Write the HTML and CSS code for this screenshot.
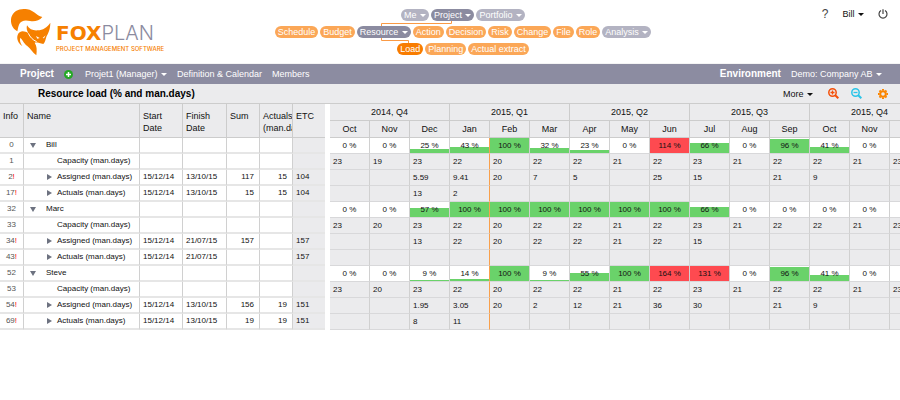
FILE: index.html
```html
<!DOCTYPE html>
<html lang="en">
<head>
<meta charset="utf-8">
<title>FoxPlan - Resource load</title>
<link rel="stylesheet" href="styles.css">
</head>
<body>
<header class="top">
  <a class="logo" href="#">
    <svg class="fox" viewBox="28 24 123 144" aria-hidden="true">
      <path fill="#f68000" d="M50 94C34 86 28 68 32 52C38 32 58 24 80 28C100 31 105 46 125 51C116 62 101 66 88 63C73 59 61 62 56 72C52 80 52 87 50 94Z"/>
      <path fill="#f68000" d="M79 76C86 88 97 92 111 91C127 90 139 83 149 68C149 87 143 99 138 108C134 119 134 127 128 132C116 128 107 126 102 128C109 138 109 150 107 166C95 157 90 145 79 137C70 131 64 117 59 113C56 121 59 129 65 138C53 131 47 116 51 105C56 92 70 91 83 100C78 91 77 84 79 76Z"/>
      <path fill="#fff" d="M106 108L117 114L110 116ZM135 106L126 114L130 115Z"/>
      <path fill="none" stroke="#fff" stroke-width="3" d="M83 100C88 111 96 120 108 125"/>
    </svg>
    <span class="brand">
      <span class="word"><b>FOX</b><span>PLAN</span></span>
      <span class="tagline">PROJECT MANAGEMENT SOFTWARE</span>
    </span>
  </a>
  <nav class="menu" aria-label="Main">
    <div class="pills">
      <button class="pill light">Me <i class="caret"></i></button>
      <button class="pill dark">Project <i class="caret"></i></button>
      <button class="pill light">Portfolio <i class="caret"></i></button>
    </div>
    <div class="pills">
      <a class="pill" href="#">Schedule</a>
      <a class="pill" href="#">Budget</a>
      <button class="pill dark">Resource <i class="caret"></i></button>
      <a class="pill" href="#">Action</a>
      <a class="pill" href="#">Decision</a>
      <a class="pill" href="#">Risk</a>
      <a class="pill" href="#">Change</a>
      <a class="pill" href="#">File</a>
      <a class="pill" href="#">Role</a>
      <button class="pill light">Analysis <i class="caret"></i></button>
    </div>
    <div class="pills">
      <a class="pill current" href="#">Load</a>
      <a class="pill" href="#">Planning</a>
      <a class="pill" href="#">Actual extract</a>
    </div>
    <svg class="links" width="378" height="46" viewBox="0 0 378 46" aria-hidden="true">
      <path d="M178.500 12v2.500H108.500V17M108.500 29v2.500H135.500V34"/>
    </svg>
  </nav>
  <div class="user">
    <button class="help" aria-label="Help">?</button>
    <button>Bill <i class="caret"></i></button>
    <button aria-label="Log out"><svg width="10" height="10" viewBox="0 0 10 10"><path fill="none" stroke="#444" stroke-width="1.200" d="M3 1.600A4 4 0 1 0 7 1.600M5 .3V5"/></svg></button>
  </div>
</header>

<div class="context">
  <strong>Project</strong>
  <button class="add" aria-label="Add project"><svg width="9" height="9" viewBox="0 0 9 9"><circle cx="4.500" cy="4.500" r="4.500" fill="#25a825"/><path stroke="#fff" stroke-width="1.500" d="M4.500 2v5M2 4.500h5"/></svg></button>
  <button>Projet1 (Manager) <i class="caret"></i></button>
  <a href="#">Definition &amp; Calendar</a>
  <a href="#">Members</a>
  <strong class="env">Environment</strong>
  <button>Demo: Company AB <i class="caret"></i></button>
</div>

<div class="toolbar">
  <h1>Resource load (% and man.days)</h1>
  <button class="more">More <i class="caret"></i></button>
  <button aria-label="Zoom in"><svg width="11" height="11" viewBox="0 0 11 11" fill="none" stroke="#f4500a"><circle cx="4.500" cy="4.500" r="3.700" stroke-width="1.500"/><path stroke-width="2" d="M7 7l3.300 3.300"/><path stroke-width="1.300" d="M2.500 4.500h4M4.500 2.500v4"/></svg></button>
  <button aria-label="Zoom out"><svg width="11" height="11" viewBox="0 0 11 11" fill="none" stroke="#2bc4e8"><circle cx="4.500" cy="4.500" r="3.700" stroke-width="1.500"/><path stroke-width="2" d="M7 7l3.300 3.300"/><path stroke-width="1.300" d="M2.500 4.500h4"/></svg></button>
  <button class="gear" aria-label="Settings"><svg width="10" height="10" viewBox="0 0 10 10" fill="none" stroke="#fb8500"><circle cx="5" cy="5" r="2.800" stroke-width="2"/><path stroke-width="2" d="M5 0v1.500M5 8.500V10M0 5h1.500M8.500 5H10M1.500 1.500l1 1M7.500 7.500l1 1M8.500 1.500l-1 1M2.500 7.500l-1 1"/></svg></button>
</div>

<main class="planner">
  <table class="tasks">
    <colgroup><col class="c-info"><col class="c-name"><col class="c-start"><col class="c-finish"><col class="c-sum"><col class="c-act"><col class="c-etc"></colgroup>
    <thead><tr><th>Info</th><th>Name</th><th>Start<br>Date</th><th>Finish<br>Date</th><th>Sum</th><th>Actuals<br>(man.days)</th><th>ETC</th></tr></thead>
    <tbody id="tasks"></tbody>
  </table>
  <div class="pane">
    <table class="months">
      <thead>
        <tr><th colspan="3">2014, Q4</th><th colspan="3">2015, Q1</th><th colspan="3">2015, Q2</th><th colspan="3">2015, Q3</th><th colspan="3">2015, Q4</th></tr>
        <tr id="months"></tr>
      </thead>
      <tbody id="load"></tbody>
    </table>
  </div>
</main>
<script src="app.js"></script>
</body>
</html>
```

FILE: styles.css
```css
* { box-sizing: border-box; }
body {
  margin: 0;
  background: #fff;
  color: #111;
  font: 9px/12px "Liberation Sans", Arial, sans-serif;
}
button {
  font: inherit;
  color: inherit;
  background: none;
  border: 0;
  padding: 0;
  white-space: nowrap;
}
button svg { display: block; }
a { color: inherit; text-decoration: none; white-space: nowrap; }
.caret {
  display: inline-block;
  margin-left: 1px;
  border: 3px solid transparent;
  border-top-color: currentColor;
  border-bottom: 0;
  vertical-align: 1px;
}

.top {
  display: grid;
  grid-template-columns: 1fr auto 1fr;
  height: 64px;
  padding: 8px 12px 0 10px;
  border-bottom: 1px solid #f4f4f4;
}
.logo { display: flex; gap: 5px; }
.fox { width: 41px; height: 48px; flex: none; }
.brand { display: flex; flex-direction: column; padding-top: 14px; }
.word {
  display: flex;
  font: 20px/23px "DejaVu Sans", sans-serif;
  color: #8b8ba0;
}
.word b { color: #f68000; }
.word span { font-family: Inter, sans-serif; font-weight: 300; }
.tagline {
  font: 500 6px/8px Inter, sans-serif;
  color: #f68000;
}
.menu {
  position: relative;
  display: flex;
  flex-direction: column;
  align-items: center;
  gap: 5px;
  padding: 1px 0 0 28px;
}
.pills { display: flex; gap: 2px; }
.pill {
  height: 12px;
  padding: 0 3px;
  border-radius: 6px;
  background: #fba757;
  color: #fff;
  line-height: 12px;
}
.pill.light { background: #b3b3c2; }
.pill.dark { background: #8b8ba0; }
.pill.current { background: #f87c00; }
.links { position: absolute; right: 0; top: 1px; fill: none; stroke: #fa9a45; }
.user {
  display: flex;
  justify-content: flex-end;
  align-items: center;
  height: 12px;
  gap: 14px;
}
.help { font-size: 12px; color: #444; }

.context {
  display: flex;
  align-items: center;
  height: 20px;
  padding: 0 18px 0 20px;
  background: #8c8ca1;
  color: #fff;
}
.context strong { font-size: 10px; margin-right: 10px; }
.context button, .context a { margin-right: 10px; }
.context .add { margin-right: 12px; }
.context .env { margin-left: auto; }
.context button:last-child { margin-right: 0; }

.toolbar {
  display: flex;
  align-items: center;
  height: 20px;
  padding: 0 12px 0 38px;
  background: #ebebed;
  border-bottom: 1px solid #ccc;
  gap: 12px;
}
.toolbar h1 { margin: 0; font-size: 10px; color: #000; }
.more { margin-left: auto; margin-right: 3px; }
.gear { margin-left: 4px; }

.planner { display: flex; align-items: flex-start; gap: 5px; }
table { table-layout: fixed; border-collapse: separate; border-spacing: 0; }
th {
  font-weight: normal;
  background: #ebebed;
  border: 0 solid #ccc;
  border-width: 0 1px 1px 0;
  padding: 0;
}
td {
  height: 16px;
  padding: 0;
  border: 0 solid #d0d0d0;
  border-width: 0 1px 1px 0;
  border-bottom-color: #e0e0e0;
  font-size: 8px;
  white-space: nowrap;
}
.tasks { width: 325px; flex: none; }
.c-info { width: 24px; }
.c-name { width: 116px; }
.c-start { width: 43px; }
.c-finish { width: 44px; }
.c-sum { width: 33px; }
.c-act { width: 33px; }
.c-etc { width: 32px; }
.tasks th {
  height: 34px;
  padding: 6px 0 0 3px;
  text-align: left;
  vertical-align: top;
  overflow: hidden;
  white-space: nowrap;
}
.tasks td { padding: 0 3px; border-bottom-width: 2px; border-bottom-color: #e6e6e6; }
.tasks td:first-child { text-align: center; color: #555; padding: 0; }
.tasks td:nth-child(5), .tasks td:nth-child(6) { text-align: right; padding-right: 5px; }
.tasks td:nth-child(7) { background: #ebebed; }
.tasks th:last-child, .tasks td:last-child { border-right: 0; }
.tasks .alert { color: #f00; }
.name { display: flex; align-items: center; gap: 5px; padding-left: 20px; }
.name.person { padding-left: 3px; gap: 10px; }
.name.plain { padding-left: 30px; }
.toggle { border: 3px solid transparent; border-left: 5px solid #6d7280; border-right: 0; }
.person .toggle { border: 3px solid transparent; border-top: 5px solid #6d7280; border-bottom: 0; }

.pane { flex: 1; min-width: 0; overflow: hidden; }
.months { width: 600px; }
.months th { height: 17px; text-align: center; }
.months td { background: #ebebed; padding-left: 3px; border-bottom-color: #d8d8da; }
.months td.pct {
  position: relative;
  padding: 0;
  background: #fff;
  text-align: center;
}
.months td.today { border-right-color: #f9a04c; }
.bar { position: absolute; left: 0; right: 0; bottom: 0; max-height: 100%; background: #6ad26a; }
.bar.over { background: #fe4a50; }
.pct span { position: relative; }
```

FILE: app.js
```javascript
const MONTHS = ["Oct", "Nov", "Dec", "Jan", "Feb", "Mar", "Apr", "May", "Jun", "Jul", "Aug", "Sep", "Oct", "Nov", "Dec"];
const TODAY = 3; // month column whose right edge marks the current date

// [id, alert, kind, name, start, finish, sum, actuals, etc, values]
const ROWS = [
  [0, 0, "person", "Bill", "", "", "", "", "", [0, 0, 25, 43, 100, 32, 23, 0, 114, 66, 0, 96, 41, 0, 0]],
  [1, 0, "plain", "Capacity (man.days)", "", "", "", "", "", [23, 19, 23, 22, 20, 22, 22, 21, 22, 23, 21, 22, 22, 21, 23]],
  [2, 1, "item", "Assigned (man.days)", "15/12/14", "13/10/15", 117, 15, 104, ["", "", 5.59, 9.41, 20, 7, 5, "", 25, 15, "", 21, 9]],
  [17, 1, "item", "Actuals (man.days)", "15/12/14", "13/10/15", 15, 15, 104, ["", "", 13, 2]],
  [32, 0, "person", "Marc", "", "", "", "", "", [0, 0, 57, 100, 100, 100, 100, 100, 100, 66, 0, 0, 0, 0, 0]],
  [33, 0, "plain", "Capacity (man.days)", "", "", "", "", "", [23, 20, 23, 22, 20, 22, 22, 21, 22, 23, 21, 22, 22, 21, 23]],
  [34, 1, "item", "Assigned (man.days)", "15/12/14", "21/07/15", 157, "", 157, ["", "", 13, 22, 20, 22, 22, 21, 22, 15]],
  [43, 1, "item", "Actuals (man.days)", "15/12/14", "21/07/15", "", "", 157, []],
  [52, 0, "person", "Steve", "", "", "", "", "", [0, 0, 9, 14, 100, 9, 55, 100, 164, 131, 0, 96, 41, 0, 0]],
  [53, 0, "plain", "Capacity (man.days)", "", "", "", "", "", [23, 20, 23, 22, 20, 22, 22, 21, 22, 23, 21, 22, 22, 21, 23]],
  [54, 1, "item", "Assigned (man.days)", "15/12/14", "13/10/15", 156, 19, 151, ["", "", 1.95, 3.05, 20, 2, 12, 21, 36, 30, "", 21, 9]],
  [69, 1, "item", "Actuals (man.days)", "15/12/14", "13/10/15", 19, 19, 151, ["", "", 8, 11]]
];

document.getElementById("months").innerHTML = MONTHS.map(m => `<th>${m}</th>`).join("");

document.getElementById("tasks").innerHTML = ROWS.map(([id, alert, kind, name, ...rest]) => {
  const toggle = kind === "plain" ? "" : `<button class="toggle" aria-label="Toggle ${name}"></button>`;
  const cells = rest.slice(0, 5).map(v => `<td>${v}</td>`).join("");
  return `<tr><td>${id}${alert ? '<span class="alert">!</span>' : ""}</td>` +
    `<td><div class="name ${kind}">${toggle}${name}</div></td>${cells}</tr>`;
}).join("");

document.getElementById("load").innerHTML = ROWS.map(row => {
  const values = row[9];
  return "<tr>" + MONTHS.map((_, i) => {
    const today = i === TODAY ? " today" : "";
    const v = values[i] ?? "";
    if (row[2] !== "person") return `<td class="${today}">${v}</td>`;
    const bar = v ? `<div class="bar${v > 100 ? " over" : ""}" style="height:${v}%"></div>` : "";
    return `<td class="pct${today}">${bar}<span>${v} %</span></td>`;
  }).join("") + "</tr>";
}).join("");
```
